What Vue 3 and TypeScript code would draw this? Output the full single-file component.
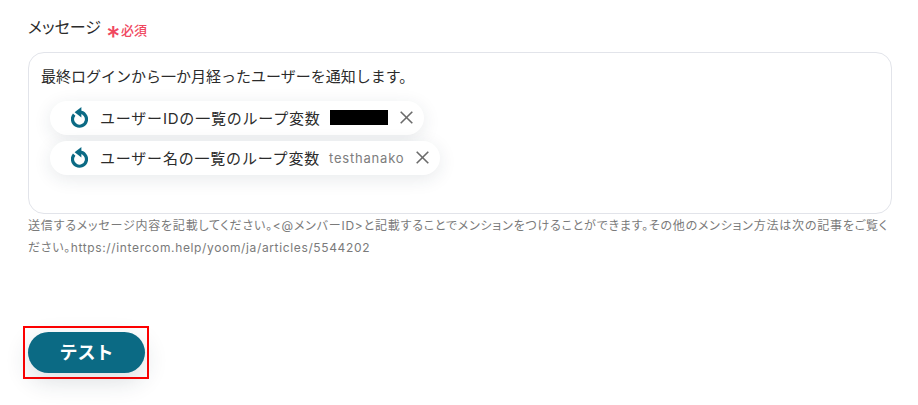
<template>
  <div class="page">
    <div class="field-label">
      <span class="label-text">メッセージ</span>
      <span class="required-star">*</span>
      <span class="required-text">必須</span>
    </div>

    <div class="message-box">
      <div class="message-line">最終ログインから一か月経ったユーザーを通知します。</div>
      <div class="chip-list">
        <div v-for="chip in chips" :key="chip.label" class="chip">
          <svg class="loop-icon" viewBox="0 0 17 21" width="17" height="21">
            <path d="M3.2 7.6a7 7 0 1 0 5.3-2.4" fill="none" stroke="#0b6a84" stroke-width="3.2" />
            <path d="M10.4 0v10.4L3.6 5.2z" fill="#0b6a84" />
          </svg>
          <span class="chip-label">{{ chip.label }}</span>
          <span v-if="chip.value" class="chip-value">{{ chip.value }}</span>
          <span v-else class="chip-mask"></span>
          <svg class="close-icon" viewBox="0 0 13 13" width="13" height="13">
            <path d="M0.7 0.7l11.6 11.6M12.3 0.7L0.7 12.3" stroke="#6b6b6b" stroke-width="1.6" fill="none" />
          </svg>
        </div>
      </div>
    </div>

    <p class="help-text">送信するメッセージ内容を記載してください。&lt;@メンバーID&gt;と記載することでメンションをつけることができます。その他のメンション方法は次の記事をご覧ください。https://intercom.help/yoom/ja/articles/5544202</p>

    <div class="action">
      <div class="focus-frame">
        <button class="test-button" type="button">テスト</button>
      </div>
    </div>
  </div>
</template>

<script setup lang="ts">
interface Chip {
  label: string
  value: string
}

const chips: Chip[] = [
  { label: 'ユーザーIDの一覧のループ変数', value: '' },
  { label: 'ユーザー名の一覧のループ変数', value: 'testhanako' },
]
</script>

<style>
html,
body {
  margin: 0;
  background: #fff;
}
</style>

<style scoped>
.page {
  width: 918px;
  height: 405px;
  box-sizing: border-box;
  padding: 16px 26px 0 28px;
  overflow: hidden;
  font-family: Inter, "Noto Sans CJK JP", sans-serif;
  color: #2b2b2b;
}

.field-label {
  display: flex;
  align-items: center;
  height: 22px;
}

.label-text {
  font-size: 16px;
  font-weight: 400;
  line-height: 22px;
  font-feature-settings: "palt";
}

.required-star {
  margin-left: 5px;
  width: 12px;
  height: 22px;
  font-size: 28px;
  font-weight: 500;
  line-height: 28px;
  text-align: center;
  color: #f0485f;
  transform: translateY(7px);
}

.required-text {
  margin-left: 3px;
  font-size: 13px;
  font-weight: 500;
  color: #f0485f;
  transform: translateY(2px);
}

.message-box {
  margin-top: 14px;
  height: 162px;
  box-sizing: border-box;
  border: 1px solid #e2e4ea;
  border-radius: 16px;
  padding: 13px 12px;
}

.message-line {
  font-size: 15px;
  line-height: 22px;
}

.chip-list {
  display: flex;
  flex-direction: column;
  align-items: flex-start;
  gap: 6px;
  margin-top: 13px;
  padding-left: 9px;
}

.chip {
  display: flex;
  align-items: center;
  height: 34px;
  padding: 0 11px 1px 21px;
  box-sizing: border-box;
  border-radius: 17px;
  background: #fff;
  box-shadow: 0 4px 18px rgba(30, 50, 70, 0.1);
}

.loop-icon {
  flex: none;
}

.chip-label {
  margin-left: 12px;
  font-size: 15px;
  letter-spacing: 0.8px;
  white-space: nowrap;
}

.chip-mask {
  width: 58px;
  height: 15px;
  margin-left: 9px;
  background: #000;
}

.chip-value {
  margin-left: 9px;
  font-size: 13px;
  letter-spacing: 0.8px;
  color: #7d7d7d;
}

.close-icon {
  margin-left: 12px;
  flex: none;
}

.help-text {
  margin: 0;
  padding-top: 1px;
  width: 864px;
  font-size: 12px;
  line-height: 22px;
  color: #7a7a7a;
  letter-spacing: 0.64px;
  font-feature-settings: "palt";
}

.help-text::first-line {
  letter-spacing: 0.79px;
}

.action {
  margin-top: 67px;
  margin-left: -5px;
  display: flex;
}

.focus-frame {
  padding: 4px 2px 4px 3px;
  border: 2px solid #f00;
}

.test-button {
  display: block;
  width: 117px;
  height: 41px;
  padding: 0 0 3px;
  border: 0;
  border-radius: 21px;
  background: #0b6a84;
  color: #fff;
  font-family: inherit;
  font-size: 18px;
  font-weight: 700;
  box-shadow: 0 8px 24px rgba(30, 50, 70, 0.16);
}
</style>
